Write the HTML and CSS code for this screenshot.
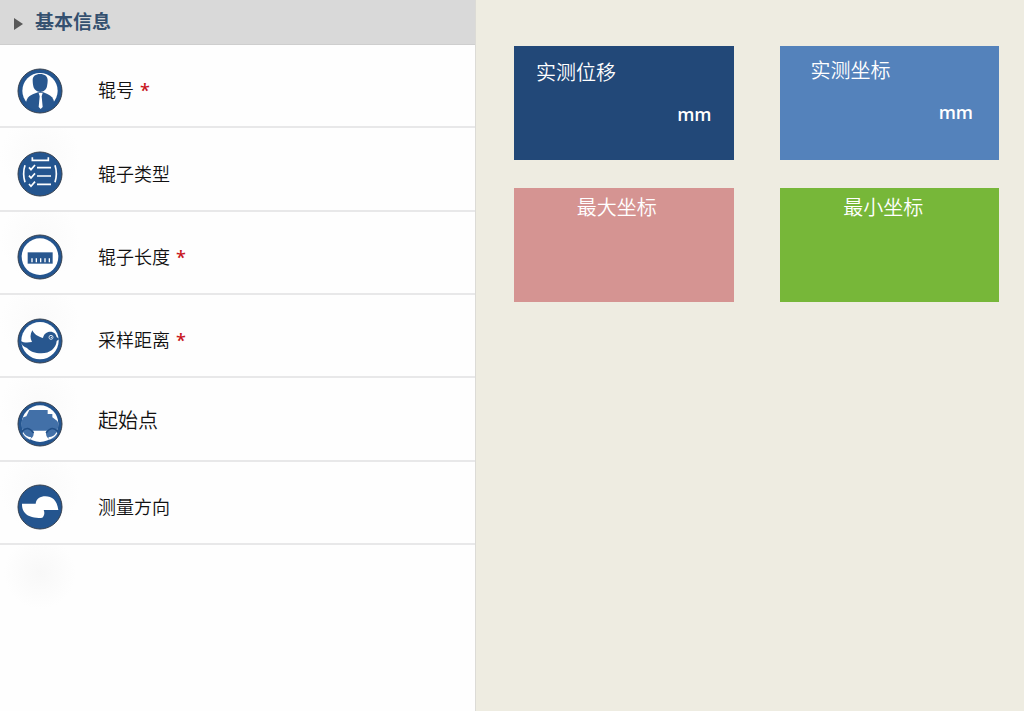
FILE: index.html
```html
<!DOCTYPE html>
<html lang="zh-CN">
<head>
<meta charset="utf-8">
<meta name="viewport" content="width=device-width, initial-scale=1">
<title>基本信息</title>
<link rel="stylesheet" href="styles.css">
</head>
<body>
<div class="page">
  <section class="panel">
    <header class="panel-header">
      <svg class="arrow" viewBox="0 0 9 12" aria-hidden="true"><path d="M0 0L9 6L0 12Z"/></svg>
      <h1 class="panel-title">基本信息</h1>
    </header>
    <ul class="fields">
      <li class="field">
        <svg class="icon" viewBox="21 23 138 138" aria-hidden="true">
          <circle class="rim" cx="90" cy="92" r="66"/>
          <circle class="white" cx="90" cy="91" r="53"/>
          <path class="blue" d="M90 41C104 41 113 48 113 59C113 67 112 72 111 78C109 88 101 95 91 95C81 95 72 88 70 78C69 72 68 67 68 59C68 48 77 41 90 41Z"/>
          <path class="blue" d="M48 128C50 114 57 106 70 101L84 96H100L112 101C124 106 131 114 133 128C127 141 111 150 90 150C69 150 55 141 48 128Z"/>
          <path class="white" d="M86 98H98L95 108L98 140L92 146L86 140L89 108Z"/>
        </svg>
        <span class="label">辊号<span class="required">*</span></span>
      </li>
      <li class="field">
        <svg class="icon" viewBox="21 23 138 138" aria-hidden="true">
          <circle class="rim" cx="90" cy="92" r="66"/>
          <path class="line" d="M67 42V51H115V42"/>
          <path class="line" d="M45 66Q37 91 45 117M135 66Q143 91 135 117"/>
          <path class="line" d="M81 73H123M81 98H123M81 123H123"/>
          <path class="line" d="M57 72L63 79L75 65M57 97L63 104L75 90M57 122L63 129L75 115"/>
        </svg>
        <span class="label">辊子类型</span>
      </li>
      <li class="field">
        <svg class="icon" viewBox="21 23 138 138" aria-hidden="true">
          <circle class="rim" cx="90" cy="92" r="66"/>
          <circle class="white" cx="90" cy="91" r="55"/>
          <path class="blue" d="M53 78H128V112H53Z"/>
          <path class="tick" d="M66 108V96M79 108V96M92 108V96M105 108V96M118 108V96"/>
        </svg>
        <span class="label">辊子长度<span class="required">*</span></span>
      </li>
      <li class="field">
        <svg class="icon" viewBox="21 23 138 138" aria-hidden="true">
          <circle class="rim" cx="90" cy="92" r="66"/>
          <circle class="white" cx="90" cy="91" r="56"/>
          <path class="blue" d="M30 91C42 98 54 97 66 95C60 84 60 72 67 60C73 73 85 79 99 83C101 71 110 64 121 64C132 64 138 71 140 80L148 86L140 92C138 114 120 129 94 129C75 129 60 123 51 113C42 110 33 102 30 91Z"/>
          <circle class="eye" cx="123" cy="81" r="6"/>
          <circle class="white" cx="124" cy="81" r="2"/>
        </svg>
        <span class="label">采样距离<span class="required">*</span></span>
      </li>
      <li class="field">
        <svg class="icon" viewBox="21 23 138 138" aria-hidden="true">
          <circle class="rim" cx="90" cy="92" r="66"/>
          <circle class="white" cx="90" cy="91" r="55"/>
          <path class="van" d="M58 50H113V62H127V72L142 83C148 95 145 106 140 112H40C32 102 32 86 40 72L49 69Z"/>
          <circle class="van" cx="54" cy="121" r="17"/>
          <circle class="van" cx="125" cy="121" r="17"/>
          <path class="arc" d="M36 115Q53 94 71 119M108 119Q126 94 143 115"/>
          <path class="white" d="M40 117Q46 130 64 132L60 139Q44 132 38 119ZM139 117Q134 130 115 132L119 139Q136 132 142 119Z"/>
        </svg>
        <span class="label label-large">起始点</span>
      </li>
      <li class="field">
        <svg class="icon" viewBox="21 23 138 138" aria-hidden="true">
          <circle class="rim" cx="90" cy="92" r="66"/>
          <path class="white" d="M36 82H77C79 67 91 60 106 60C126 60 141 71 145 101H101C105 109 103 118 97 124C78 127 50 122 41 105C37 98 36 90 36 82Z"/>
        </svg>
        <span class="label">测量方向</span>
      </li>
    </ul>
    <div class="haze"></div>
  </section>
  <main class="board">
    <article class="card card-navy">
      <h2 class="card-title">实测位移</h2>
      <p class="unit">mm</p>
    </article>
    <article class="card card-blue">
      <h2 class="card-title">实测坐标</h2>
      <p class="unit">mm</p>
    </article>
    <article class="card card-pink">
      <h2 class="card-title">最大坐标</h2>
    </article>
    <article class="card card-green">
      <h2 class="card-title">最小坐标</h2>
    </article>
  </main>
</div>
</body>
</html>
```
FILE: styles.css
```css
* { box-sizing: border-box; }

body {
  margin: 0;
  font-family: "Noto Sans CJK SC", sans-serif;
  color: #111;
  background: #eeece1;
}

h1, h2, p, ul { margin: 0; padding: 0; }

.page {
  display: grid;
  grid-template-columns: 476fr 548fr;
  min-height: 100vh;
}

.panel {
  background: #fefefe;
  border-right: 1px solid #dcdbd6;
}

.panel-header {
  display: flex;
  align-items: center;
  gap: 12px;
  height: 45px;
  padding: 0 14px 2px;
  background: #d9d9d9;
  border-bottom: 1px solid #cecece;
}

.arrow {
  width: 9px;
  height: 12px;
  margin-top: 6px;
  fill: #595959;
}

.panel-title {
  font-size: 19px;
  line-height: 28px;
  font-weight: 700;
  color: #34506f;
}

.fields {
  display: grid;
  grid-auto-rows: 1fr;
  min-height: 500px;
  list-style: none;
}

.field {
  display: flex;
  align-items: center;
  gap: 35px;
  padding: 10px 17px 0;
  border-bottom: 2px solid #e8e8e9;
  background: radial-gradient(circle 40px at 40px 28px, #fafafa, #fefefe);
}

.field:first-child { background: none; }

.icon {
  flex: none;
  width: 46px;
  height: 46px;
}

.rim { fill: #24558f; stroke: #343f4e; stroke-width: 3; }
.blue { fill: #28578f; }
.white { fill: #fff; }
.van { fill: #4270a8; }
.arc { fill: none; stroke: #204e86; stroke-width: 4; }
.line { fill: none; stroke: #fff; stroke-width: 5; }
.tick { fill: none; stroke: #fff; stroke-width: 4; }
.eye { fill: #28578f; stroke: #d6e1ee; stroke-width: 3; }

.label {
  font-size: 18px;
  line-height: 28px;
  font-weight: 350;
  padding-bottom: 2px;
}

.label-large {
  font-size: 20px;
  padding-bottom: 8px;
}

.required {
  margin-left: 6px;
  font-family: "Open Sans", sans-serif;
  font-weight: 600;
  color: #c8171e;
}

.haze {
  height: 64px;
  background: radial-gradient(circle 36px at 40px 28px, #f8f8f8, #fefefe);
}

.board {
  display: grid;
  grid-template-columns: 1fr 1fr;
  grid-auto-rows: 114px;
  align-content: start;
  gap: 28px 46px;
  padding: 46px 25px 46px 38px;
}

.card {
  padding: 5px 24px;
  color: #fff;
}

.card-title {
  font-size: 20px;
  line-height: 28px;
  font-weight: 350;
}

.unit {
  font-family: "Open Sans", sans-serif;
  font-size: 18px;
  line-height: 28px;
  font-weight: 600;
  text-align: right;
  padding-top: 14px;
}

.card-navy { background: #224878; padding: 12px 22px; }
.card-blue { background: #5482bb; padding: 10px 26px 10px 31px; }
.card-pink { background: #d59492; text-align: center; padding-right: 38px; }
.card-green { background: #77b739; text-align: center; padding-right: 36px; }
```
